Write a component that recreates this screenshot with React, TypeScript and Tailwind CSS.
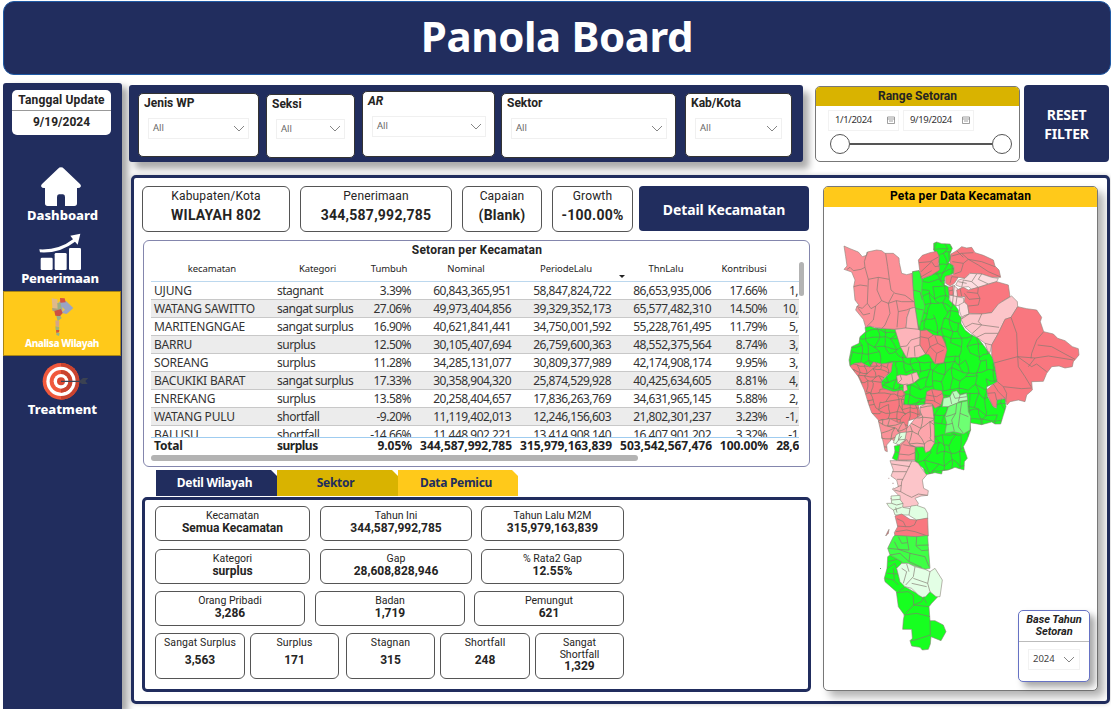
import React from "react";

const din = "font-['Roboto','Liberation_Sans',sans-serif]";
const seg = "font-['Noto_Sans','Open_Sans',sans-serif]";

const rows: string[][] = [
  ["UJUNG", "stagnant", "3.39%", "60,843,365,951", "58,847,824,722", "86,653,935,006", "17.66%", "1,"],
  ["WATANG SAWITTO", "sangat surplus", "27.06%", "49,973,404,856", "39,329,352,173", "65,577,482,310", "14.50%", "10,"],
  ["MARITENGNGAE", "sangat surplus", "16.90%", "40,621,841,441", "34,750,001,592", "55,228,761,495", "11.79%", "5,"],
  ["BARRU", "surplus", "12.50%", "30,105,407,694", "26,759,600,363", "48,552,375,564", "8.74%", "3,"],
  ["SOREANG", "surplus", "11.28%", "34,285,131,077", "30,809,377,989", "42,174,908,174", "9.95%", "3,"],
  ["BACUKIKI BARAT", "sangat surplus", "17.33%", "30,358,904,320", "25,874,529,928", "40,425,634,605", "8.81%", "4,"],
  ["ENREKANG", "surplus", "13.58%", "20,258,404,657", "17,836,263,769", "34,631,965,145", "5.88%", "2,"],
  ["WATANG PULU", "shortfall", "-9.20%", "11,119,402,013", "12,246,156,603", "21,802,301,237", "3.23%", "-1,"],
  ["BALUSU", "shortfall", "-14.66%", "11,448,902,221", "13,414,908,140", "16,407,901,202", "3.32%", "-1"],
];
const total = ["Total", "surplus", "9.05%", "344,587,992,785", "315,979,163,839", "503,542,567,476", "100.00%", "28,6"];
const gridCols = "grid grid-cols-[122px_89px_54px_100px_100px_100px_56px_27px] w-[648px]";

function Chevron() {
  return (
    <svg width="12" height="8" viewBox="0 0 12 8" className="shrink-0">
      <path d="M1 1l5 5 5-5" fill="none" stroke="#777" strokeWidth="0.9" />
    </svg>
  );
}

function Filter({ title, box, drop, italic }: { title: string; box: string; drop: string; italic?: boolean }) {
  return (
    <div className={`shrink-0 rounded-[5px] border border-[#333] bg-white ${box}`}>
      <div className={`pl-[5px] pt-[1px] text-[12px] font-bold leading-[17px] text-[#252423] ${din} ${italic ? "italic" : ""}`}>{title}</div>
      <div className={`ml-[9px] flex items-center justify-between border border-[#f0f0f0] pl-[4px] pr-[3px] ${drop}`}>
        <span className={`text-[9.5px] text-[#666] ${seg}`}>All</span>
        <Chevron />
      </div>
    </div>
  );
}

function Kpi({ label, value, w }: { label: string; value: string; w: string }) {
  return (
    <div className={`h-[46px] shrink-0 rounded-[6px] border border-[#555] bg-white text-center text-[#252423] ${din} ${w}`}>
      <div className="pt-[1px] text-[12px] leading-[16px] tracking-[0.15px]">{label}</div>
      <div className="whitespace-nowrap text-[14px] font-bold leading-[22px] tracking-[0.25px]">{value}</div>
    </div>
  );
}

function Stat({ label, value, w }: { label: string; value: string; w: string }) {
  return (
    <div className={`h-[35px] shrink-0 rounded-[6px] border border-[#555] bg-white text-center text-[#252423] ${din} ${w}`}>
      <div className="pt-[2px] text-[10.5px] leading-[13px]">{label}</div>
      <div className="text-[12px] font-bold leading-[12px]">{value}</div>
    </div>
  );
}

function Small({ label, value, w, tall }: { label: string; value: string; w: string; tall?: boolean }) {
  return (
    <div className={`h-[46px] shrink-0 rounded-[6px] border border-[#555] bg-white text-center text-[#252423] ${din} ${w}`}>
      <div className={`px-2 text-[10.5px] ${tall ? "pt-[3px] leading-[12px]" : "-mx-2 pt-[2px] leading-[14px] tracking-[0.1px]"}`}>{label}</div>
      <div className={`text-[12px] font-bold ${tall ? "leading-[11px]" : "leading-[21px]"}`}>{value}</div>
    </div>
  );
}

/** Brick-like network of irregular district borders. */
function mesh(x0: number, y0: number, x1: number, y1: number, sx: number, sy: number, seed: number) {
  let s = seed * 7919 + 13;
  const rnd = () => {
    s = (s * 1103515245 + 12345) % 2147483648;
    return s / 2147483648 - 0.5;
  };
  const nx = Math.ceil((x1 - x0) / sx) + 2;
  const ny = Math.ceil((y1 - y0) / sy) + 2;
  const pts: number[][][] = [];
  for (let j = 0; j < ny; j++) {
    const row: number[][] = [];
    for (let i = 0; i < nx; i++) row.push([x0 + (i - 0.5) * sx + rnd() * sx * 0.9, y0 + (j - 0.5) * sy + rnd() * sy * 0.9]);
    pts.push(row);
  }
  let d = "";
  for (let j = 0; j < ny; j++) {
    for (let i = 0; i < nx; i++) {
      const [x, y] = pts[j][i];
      if (i + 1 < nx && rnd() < 0.36) {
        const [a, b] = pts[j][i + 1];
        d += `M${x.toFixed(1)} ${y.toFixed(1)}Q${((x + a) / 2 + rnd() * 8).toFixed(1)} ${((y + b) / 2 + rnd() * 12).toFixed(1)} ${a.toFixed(1)} ${b.toFixed(1)}`;
      }
      if (j + 1 < ny && rnd() < 0.3) {
        const [a, b] = pts[j + 1][i];
        d += `M${x.toFixed(1)} ${y.toFixed(1)}Q${((x + a) / 2 + rnd() * 12).toFixed(1)} ${((y + b) / 2 + rnd() * 8).toFixed(1)} ${a.toFixed(1)} ${b.toFixed(1)}`;
      }
    }
  }
  return d;
}

type Region = { c: string; p: string; l?: string; m?: [number, number, number, number, number, number] };

const regions: Region[] = [
  {
    c: "#17ff20",
    p: "296,40 305,36 320,41 345,42 352,55 345,72 350,85 340,98 355,105 359,128 345,135 330,140 328,165 340,170 343,190 342,210 360,226 370,240 372,255 378,262 378,280 390,300 405,312 430,325 445,345 460,365 472,382 480,410 487,455 475,462 455,470 458,500 475,530 484,535 486,510 510,506 513,530 505,556 497,582 480,582 470,576 440,584 405,578 407,600 396,630 385,650 397,685 388,695 387,720 360,712 340,720 322,722 320,732 300,728 272,734 265,715 240,695 238,652 270,650 298,640 296,560 275,522 250,526 205,524 210,490 175,485 142,475 138,455 168,425 172,398 140,402 115,396 105,412 80,398 60,400 45,408 42,390 50,350 72,340 75,320 92,305 90,292 105,288 118,294 150,296 180,298 250,298 242,250 233,200 233,125 252,122 262,146 290,135 313,115 310,80 296,60",
    m: [40, 36, 515, 735, 25, 25],
  },
  {
    c: "#2cff34",
    p: "233,125 252,122 262,146 260,190 270,230 252,298 246,270 240,232 233,190",
    l: "M233 180L255 185L262 210M240 235L265 240",
  },
  {
    c: "#fc8f96",
    p: "27,48 45,56 70,66 82,80 95,76 97,66 125,60 140,62 150,70 175,70 192,84 193,98 200,130 215,134 231,130 233,160 236,200 240,232 225,236 216,262 213,294 180,298 150,296 118,292 105,288 92,292 85,268 62,240 66,228 72,226 60,210 56,170 60,150 50,126 27,118 36,108 32,80",
    l: "M36 118L45 112L55 122L78 118L90 112L88 95L97 66M90 112L100 148L130 142L163 148L158 110L152 70M100 148L97 220L82 235L66 230M130 142L126 180L140 212L160 220L184 212L200 215L236 215M163 148L168 180L180 190L210 196L236 215M176 190L160 220M97 220L108 236L122 228L140 212M122 228L115 270L95 290M184 212L190 245L186 292M160 220L165 250L150 285L140 296M56 170L75 165L97 168M190 245L214 240L225 236M70 235L85 255L105 250",
  },
  { c: "#fdb4ba", p: "225,236 240,232 246,270 250,298 256,302 255,345 272,372 250,382 215,384 196,350 190,330 180,298 213,294 216,262", l: "M213 294L252 298M196 350L215 348L228 330L255 322M215 384L222 350M240 380L238 350L255 345" },
  { c: "#f9777f", p: "250,90 262,76 285,68 305,64 313,80 310,100 314,120 290,135 260,146 254,120", l: "M252 98L285 95L312 80M258 125L290 95L300 110L312 108M256 142L290 122" },
  { c: "#f9777f", p: "256,302 275,300 295,315 320,318 330,340 336,360 326,398 300,402 282,374 272,372 255,345", l: "M256 320L280 325L295 315M280 325L285 350L272 372M285 350L308 340L330 352M308 340L300 318M285 350L305 370L326 360M305 370L300 400" },
  { c: "#f9777f", p: "45,408 60,400 80,398 105,412 115,396 140,402 172,398 168,425 150,440 138,455 142,475 175,485 200,480 210,490 205,524 250,526 257,556 240,566 220,572 215,620 140,625 140,590 130,570 110,548 100,520 88,480 70,440", m: [40, 396, 260, 625, 22, 18] },
  { c: "#fb9198", p: "130,572 165,566 190,578 207,576 215,596 240,640 240,690 190,692 176,684 190,640 170,628 155,645 157,665 150,662 140,615", m: [130, 566, 240, 692, 26, 24] },
  { c: "#fda5ab", p: "240,566 257,556 255,530 275,520 292,522 296,560 298,600 298,640 285,662 272,668 265,650 240,650 225,645 210,628 215,596", m: [215, 520, 300, 668, 30, 26] },
  { c: "#fdb4ba", p: "185,438 195,434 215,436 245,426 253,445 235,460 215,465 218,480 205,486 205,464 188,460", l: "M195 434L200 448L188 460M205 464L218 462M230 432L235 460" },
  { c: "#f9777f", p: "270,520 275,485 290,478 320,482 325,500 318,525 300,535 292,522", l: "M275 495L305 500L322 490M290 478L300 515M272 510L295 512L318 525" },
  { c: "#b8ffbb", p: "325,505 345,500 352,485 365,482 375,495 395,490 398,510 375,514 365,520 340,530 322,530", l: "M345 500L350 522M375 495L370 515M352 485L360 505L395 500" },
  { c: "#6eff73", p: "340,530 365,520 398,512 400,545 407,560 405,600 385,612 355,605 330,610 335,580 330,560", l: "M365 520L362 550L350 570L358 604M332 560L350 555L362 550M380 516L375 550L400 560M375 550L370 590L385 610M334 585L352 580" },
  {
    c: "#f9777f",
    p: "348,72 365,62 380,50 395,54 410,52 420,68 445,76 475,90 480,108 492,120 497,142 470,142 440,132 405,130 390,145 370,142 358,160 345,168 332,160 332,138 355,134 358,110 345,98",
    l: "M350 78L380 70L415 68M380 70L400 88L440 95L480 110M352 95L385 100L400 88L430 105L460 125L495 140M385 100L378 125L358 132M345 160L350 140L370 142M365 62L385 82",
  },
  { c: "#fddde0", p: "390,145 405,130 440,132 470,142 490,145 485,155 460,162 430,172 410,178 400,170 380,172 362,165 370,150", l: "M380 172L385 150L410 155L425 132M410 155L430 172M440 132L430 148L460 162M370 155L395 160" },
  { c: "#fddde0", p: "342,178 355,165 370,178 366,200 386,204 386,222 362,228 345,212", l: "M345 195L366 200M358 165L352 225M366 200L362 228" },
  { c: "#fddde0", p: "372,225 388,216 398,225 402,252 380,262 374,245" },
  { c: "#f9777f", p: "365,180 385,172 400,180 430,172 485,155 520,165 525,200 500,215 480,235 470,248 440,252 402,250 398,225 388,215 390,200 368,200", l: "M430 172L428 190L395 186M428 190L435 205L402 208M435 205L430 225L400 228M375 175L380 198M388 190L402 208" },
  { c: "#f9777f", p: "340,172 354,168 354,195 343,195", l: "M342 183L354 180" },
  { c: "#fcc5c9", p: "402,252 440,252 470,248 490,222 530,198 547,215 548,230 528,262 510,268 490,310 470,345 465,368 458,362 450,340 430,325 410,310 390,292 378,268 385,258", l: "M378 268L402 252M440 252L430 275L440 285L492 292M390 292L412 280L440 285M440 285L412 310M425 322L450 310L490 310M450 340L470 345" },
  {
    c: "#f9777f",
    p: "548,230 575,236 605,240 620,262 616,275 626,305 655,312 668,325 690,332 712,350 730,356 732,375 715,395 712,410 690,414 672,408 650,410 635,430 625,454 590,455 592,480 575,495 570,515 550,510 525,515 516,525 510,505 485,510 484,532 475,530 460,500 455,480 475,462 487,455 478,400 470,375 470,345 490,310 510,268 528,262",
    l: "M528 262L545 310L548 380L550 410L570 440L588 470M626 305L605 330L590 370L588 385M474 400L510 390L548 380L600 384L640 378L715 390M608 345L650 350L690 372L720 388M548 380L590 410L605 402L635 425M600 384L580 410M487 455L505 470L560 476L590 474M505 470L515 490L512 515M458 490L480 488L485 510M475 462L490 485L510 505",
  },
];

const south: Region[] = [
  { c: "#dcffde", p: "183,45 195,38 214,36 210,60 192,75 175,68", l: "M195 38L190 60L210 58M183 70L200 48" },
  { c: "#17ff20", p: "178,78 195,75 192,105 186,122 172,115 180,95", l: "M178 95L193 98" },
  { c: "#fb9198", p: "198,76 215,58 225,75 240,80 240,120 190,120 192,100", l: "M192 102L222 105L240 98M205 74L238 80" },
  { c: "#fcc5c9", p: "165,122 190,122 240,124 250,130 262,148 275,165 262,180 266,205 280,212 278,226 258,228 240,235 250,250 245,262 225,260 205,262 195,250 190,225 173,208 190,200 185,180 168,168 175,150", l: "M230 124L215 155L200 185L197 215L215 225L230 232L250 222L278 226M170 132L225 140M172 155L215 155M186 178L204 178M188 200L199 196M178 210L197 215" },
  { c: "#e0ffe2", p: "168,228 195,226 196,240 204,250 203,262 225,266 228,258 245,256 270,265 278,280 278,296 245,300 220,285 180,285 175,270 163,262 155,250 170,250", l: "M225 266L222 285M170 240L195 238M175 270L200 262M170 250L185 255L204 250M182 262L186 278" },
  { c: "#f9777f", p: "180,288 200,282 225,298 245,300 278,294 280,348 245,350 180,348 178,338 188,320", l: "M186 296L205 305L212 320L225 320L238 315L245 300M186 318L212 320M183 335L215 330L240 335L278 348" },
  { c: "#3eff45", p: "175,350 180,346 245,350 278,346 280,380 285,445 270,448 215,430 200,430 165,405 158,385", l: "M215 350L222 390L190 388L178 365M245 350L243 378L260 392L280 390M160 385L190 388L225 400L222 425M225 400L270 410L282 440M165 405L195 400L222 425L260 442M190 350L200 370L217 368M245 376L280 375" },
  { c: "#17ff20", p: "165,405 200,425 200,432 185,445 198,485 210,500 245,520 265,532 285,515 300,520 307,532 290,550 282,560 285,602 300,602 325,615 333,635 318,662 288,650 286,672 280,688 262,690 255,682 230,678 225,662 232,655 230,628 203,628 205,600 208,585 190,560 184,515 150,485 148,475 156,445 158,410", l: "M160 425L185 418M156 445L180 430L184 445M150 475L175 480L190 495M156 460L188 462M175 445L178 480M184 518L220 515L235 525L236 555L212 580M210 500L190 515M236 555L282 560M265 532L260 545L236 555M206 585L245 580L285 590M285 602L286 645L240 660L228 662M265 532L275 550" },
  { c: "#e3ffe5", p: "185,445 200,430 220,430 240,440 270,448 285,455 300,445 322,480 315,530 303,530 285,515 272,530 262,532 250,525 230,505 210,500 195,485", l: "M200 445L215 455L205 490M240 440L235 470L212 495M235 475L278 490M285 455L278 490L285 515M230 490L275 500M215 432L222 455" },
  { c: "#d4727c", p: "162,328 160,340 152,348 158,335" },
];

function Draw({ list, id }: { list: Region[]; id: string }) {
  return (
    <>
      {list.map((r, i) => (
        <g key={i}>
          <polygon points={r.p} fill={r.c} stroke="#8b8378" strokeWidth="1.8" strokeLinejoin="round" />
          {r.m && (
            <>
              <clipPath id={`${id}${i}`}>
                <polygon points={r.p} />
              </clipPath>
              <path clipPath={`url(#${id}${i})`} d={mesh(r.m[0], r.m[1], r.m[2], r.m[3], r.m[4], r.m[5], i + 3)} fill="none" stroke="#73806a" strokeWidth="2" />
            </>
          )}
          {r.l && <path d={r.l} fill="none" stroke="#82786f" strokeWidth="2" strokeLinejoin="round" />}
        </g>
      ))}
    </>
  );
}

function RegionMap() {
  return (
    <svg width="260" height="430" viewBox="0 0 780 1290" className="ml-[11px] mt-[23px] block">
      <Draw list={regions} id="n" />
      <g transform="translate(0 570)">
        <Draw list={south} id="s" />
        <rect x="135" y="444" width="3" height="3" fill="#6a9a6c" />
        <path d="M160 175h3M172 190h4M176 204l-4 3M170 236h-4" stroke="#a88" strokeWidth="2.5" />
      </g>
    </svg>
  );
}

function MiniMap() {
  return (
    <svg width="24" height="40" viewBox="0 0 72 120" className="block">
      <path d="M5 4l17 3 4 38-18-4z" fill="#dfb98b" />
      <path d="M26 14l22-2 22 21-20 18-24-5z" fill="#9aa4c4" />
      <path d="M30 3l14 1 3 12-16 1z" fill="#d5533f" />
      <path d="M22 18l10 0 3 18-12 6z" fill="#9cae82" />
      <path d="M6 33l18 2 2 9-18-2z" fill="#a9a27e" />
      <path d="M37 30l8 8-8 7z" fill="#e8c44b" />
      <path d="M13 42l20-6 5 12-8 10-14-2z" fill="#cd5042" />
      <path d="M19 57h12l4 6-12 10z" fill="#98b08b" />
      <path d="M16 70l12 2-1 18-10-2z" fill="#d3a58a" />
      <path d="M16 88l12 3-2 12-9-4z" fill="#9fb37a" />
      <path d="M18 99l10 0-1 7-8 2z" fill="#d5533f" />
      <path d="M19 107l10 1-2 9-8-3z" fill="#91b58b" />
    </svg>
  );
}

function Target() {
  return (
    <svg width="48" height="40" viewBox="0 0 144 120" className="block">
      <circle cx="57" cy="58" r="55" fill="#f0583c" />
      <path d="M57 3a55 55 0 0 1 0 110z" fill="#c9432f" />
      <circle cx="57" cy="58" r="44" fill="#fff" />
      <circle cx="57" cy="58" r="34" fill="#f0583c" />
      <path d="M57 24a34 34 0 0 1 0 68z" fill="#c9432f" />
      <circle cx="57" cy="58" r="22" fill="#fff" />
      <circle cx="57" cy="58" r="12" fill="#d84731" />
      <path d="M57 56h56l10-8h16l-9 9 7 9h-17l-9-6H57z" fill="#3b4252" />
    </svg>
  );
}

function CalendarIcon() {
  return (
    <svg width="8" height="8" viewBox="0 0 8 8" className="mb-[2px]">
      <path d="M.5 1h7v6.5h-7zM.5 3h7M2 5h4" fill="none" stroke="#777" strokeWidth=".7" />
    </svg>
  );
}

export default function App() {
  return (
    <div className="relative flex h-[709px] w-[1111px] flex-col overflow-hidden bg-white">
      <header className={`ml-[3px] mt-[1px] flex h-[74px] shrink-0 items-center justify-center rounded-[11px] border border-[#1f5aa5] bg-[#212d5e] pb-[6px] text-[42px] font-bold text-white ${seg}`}>
        <span className="tracking-[-0.4px]">Panola Board</span>
      </header>

      <div className="mt-[8px] flex min-h-0 flex-1">
        <aside className="ml-[3px] flex w-[119px] shrink-0 flex-col rounded-t-[3px] bg-[#212d5e] shadow-[6px_4px_7px_rgba(0,0,0,0.35)]">
          <div className={`ml-[9px] mt-[7px] h-[45px] w-[99px] rounded-[5px] bg-white text-center text-[12px] font-bold text-[#252423] ${din}`}>
            <div className="h-[21px] border-b border-[#999] leading-[20px] tracking-[0.15px]">Tanggal Update</div>
            <div className="leading-[23px]">9/19/2024</div>
          </div>
          <svg width="40" height="40" viewBox="0 0 120 120" className="ml-[38px] mt-[32px] block">
            <path d="M60 1q5 0 9 4l48 46q4 4 2 8-2 4-8 4h-3v46q0 8-8 8H72V90q0-8-6-8H54q-6 0-6 8v27H20q-8 0-8-8V63H9q-6 0-8-4-2-4 2-8L51 5q4-4 9-4z" fill="#fff" />
          </svg>
          <div className={`text-center text-[13px] font-extrabold leading-[17px] text-white ${seg}`}>Dashboard</div>
          <svg width="42" height="37" viewBox="0 0 126 111" className="ml-[36px] mt-[9px] block">
            <g fill="#fff">
              <rect x="5" y="74" width="36" height="37" rx="4" />
              <rect x="47" y="60" width="36" height="51" rx="4" />
              <rect x="90" y="45" width="36" height="66" rx="4" />
              <path d="M1 49Q60 52 102 19L94 8 124 2 116 35 108 26Q62 62 3 58z" />
            </g>
          </svg>
          <div className={`pr-[5px] text-center text-[13px] font-extrabold leading-[17px] text-white ${seg}`}><span className="tracking-[-0.2px]">Penerimaan</span></div>
          <div className="mt-[4px] flex h-[65px] w-[118px] flex-col items-center border border-[#a98514] bg-[#ffc91a] pt-[5px]">
            <MiniMap />
            <div className={`whitespace-nowrap text-[10px] font-extrabold leading-[13px] tracking-[-0.45px] text-white ${seg}`}>Analisa Wilayah</div>
          </div>
          <div className="ml-[39px] mt-[6px]"><Target /></div>
          <div className={`text-center text-[13px] font-extrabold leading-[14px] text-white ${seg}`}>Treatment</div>
        </aside>

        <div className="ml-[7px] mt-[2px] flex min-w-0 flex-1 flex-col">
          <div className="flex h-[77px] shrink-0">
            <div className="flex w-[674px] shrink-0 rounded-[3px] bg-[#212d5e] pl-[9px] shadow-[6px_7px_7px_rgba(0,0,0,0.33)]">
              <Filter title="Jenis WP" box="mt-[8px] h-[64px] w-[121px]" drop="mt-[6px] h-[21px] w-[101px]" />
              <Filter title="Seksi" box="ml-[7px] mt-[9px] h-[64px] w-[89px]" drop="mt-[6px] h-[20px] w-[69px]" />
              <Filter title="AR" italic box="ml-[7px] mt-[6px] h-[66px] w-[133px]" drop="mt-[6px] h-[21px] w-[114px]" />
              <Filter title="Sektor" box="ml-[6px] mt-[8px] h-[65px] w-[175px]" drop="mt-[6px] h-[21px] w-[156px]" />
              <Filter title="Kab/Kota" box="ml-[9px] mt-[8px] h-[64px] w-[107px]" drop="mt-[6px] h-[21px] w-[87px]" />
            </div>
            <div className="ml-[12px] mt-[1px] h-[76px] w-[205px] shrink-0 overflow-hidden rounded-[5px] border border-[#777] bg-white">
              <div className={`h-[19px] bg-[#d9b300] text-center text-[12px] font-bold leading-[19px] text-[#252423] ${din}`}>Range Setoran</div>
              <div className={`mt-[4px] flex gap-[4px] pl-[12px] text-[9.5px] text-[#333] ${seg}`}>
                <div className="flex h-[21px] w-[71px] items-center justify-between border border-[#f2f2f2] pl-[6px] pr-[3px]"><span className="tracking-[-0.35px]">1/1/2024</span><CalendarIcon /></div>
                <div className="flex h-[21px] w-[71px] items-center justify-between border border-[#f2f2f2] pl-[6px] pr-[3px]"><span className="tracking-[-0.35px]">9/19/2024</span><CalendarIcon /></div>
              </div>
              <div className="ml-[14px] mt-[3px] flex w-[182px] items-center">
                <div className="h-[20px] w-[20px] rounded-full border border-[#555]" />
                <div className="h-[2px] flex-1 bg-[#555]" />
                <div className="h-[20px] w-[20px] rounded-full border border-[#555]" />
              </div>
            </div>
            <div className={`ml-[4px] flex w-[85px] items-center justify-center rounded-[4px] bg-[#212d5e] text-center text-[14px] font-bold leading-[19px] text-white ${seg}`}>
              <span className="tracking-[-0.2px]">RESET<br />FILTER</span>
            </div>
          </div>

          <main className="ml-[2px] mt-[13px] flex h-[529px] w-[979px] shrink-0 rounded-[5px] border-[3px] border-[#212d5e] bg-white pl-[8px] pt-[8px] shadow-[0_0_4px_rgba(0,0,0,0.2)]">
            <section className="flex w-[668px] shrink-0 flex-col">
              <div className="flex h-[46px] shrink-0">
                <Kpi label="Kabupaten/Kota" value="WILAYAH 802" w="w-[148px]" />
                <Kpi label="Penerimaan" value="344,587,992,785" w="ml-[10px] w-[152px]" />
                <Kpi label="Capaian" value="(Blank)" w="ml-[10px] w-[80px]" />
                <Kpi label="Growth" value="-100.00%" w="ml-[10px] w-[81px]" />
                <div className={`ml-[6px] flex h-[45px] w-[170px] items-center justify-center rounded-[4px] bg-[#212d5e] pt-[2px] text-[14px] font-bold tracking-[-0.1px] text-white ${seg}`}>Detail Kecamatan</div>
              </div>

              <div className="ml-[1px] mt-[8px] flex h-[227px] w-[667px] shrink-0 flex-col rounded-[6px] border border-[#8486ad] pl-[7px]">
                <div className={`h-[20px] pr-[6px] text-center text-[12px] font-bold leading-[19px] tracking-[0.2px] text-[#252423] ${din}`}>Setoran per Kecamatan</div>
                <div className="flex">
                  <div className="h-[193px] w-[648px] overflow-hidden">
                    <div className={`${gridCols} h-[21px] border-b border-[#bcd8ee] text-center text-[9.5px] leading-[16px] tracking-[-0.1px] text-[#252423] ${seg}`}>
                      <span>kecamatan</span><span>Kategori</span><span>Tumbuh</span><span>Nominal</span>
                      <span className="relative">PeriodeLalu<i className="absolute right-[-9px] top-[14px] border-x-[3px] border-t-[3px] border-x-transparent border-t-[#222]" /></span>
                      <span>ThnLalu</span><span>Kontribusi</span><span />
                    </div>
                    <div className="h-[155px] overflow-hidden">
                      {rows.map((r, i) => (
                        <div key={i} className={`${gridCols} h-[18px] whitespace-nowrap border-b border-[#c8c8c8] text-[12px] leading-[17px] text-[#333] ${seg} ${i % 2 ? "bg-[#ececec]" : "bg-white"}`}>
                          {r.map((v, j) => (
                            <span key={j} className={j === 0 ? "pl-[3px] tracking-[-0.2px]" : j === 1 ? "pl-[4px] tracking-[-0.5px]" : j === 7 ? "pr-[1px] text-right tracking-[-0.5px]" : "pr-[5px] text-right tracking-[-0.53px]"}>{v}</span>
                          ))}
                        </div>
                      ))}
                    </div>
                    <div className={`${gridCols} h-[17px] whitespace-nowrap border-t border-[#9fccf0] text-[12px] font-bold leading-[16px] text-[#222] ${seg}`}>
                      {total.map((v, j) => (
                        <span key={j} className={j === 0 ? "pl-[3px] tracking-[-0.2px]" : j === 1 ? "pl-[4px] tracking-[-0.5px]" : j === 7 ? "flex justify-end tracking-[-0.3px]" : "flex justify-end pr-[4px] tracking-[-0.05px]"}>{v}</span>
                      ))}
                    </div>
                  </div>
                  <div className="mt-[1px] h-[34px] w-[5px] rounded-full bg-[#b3b3b3]" />
                </div>
                <div className="mt-[1px] h-[6px] w-[487px] rounded-full bg-[#b3b3b3]" />
              </div>

              <div className={`ml-[14px] mt-[3px] flex h-[26px] shrink-0 text-center text-[12px] font-bold leading-[26px] tracking-[-0.3px] ${seg}`}>
                <div className="w-[121px] bg-[#212d5e] pr-[4px] text-white [clip-path:polygon(0_0,115px_0,100%_6px,100%_100%,0_100%)]">Detil Wilayah</div>
                <div className="w-[121px] bg-[#d9b300] pr-[4px] text-[#212d5e] [clip-path:polygon(0_0,115px_0,100%_6px,100%_100%,0_100%)]">Sektor</div>
                <div className="w-[120px] bg-[#ffc91a] pr-[4px] text-[#212d5e] [clip-path:polygon(0_0,114px_0,100%_6px,100%_100%,0_100%)]">Data Pemicu</div>
              </div>

              <div className="mt-px h-[195px] w-[669px] shrink-0 rounded-[5px] border-[3px] border-[#212d5e] pl-[10px] pt-[6px]">
                <div className="flex">
                  <Stat label="Kecamatan" value="Semua Kecamatan" w="w-[155px]" />
                  <Stat label="Tahun Ini" value="344,587,992,785" w="ml-[10px] w-[152px]" />
                  <Stat label="Tahun Lalu M2M" value="315,979,163,839" w="ml-[9px] w-[143px]" />
                </div>
                <div className="mt-[8px] flex">
                  <Stat label="Kategori" value="surplus" w="w-[155px]" />
                  <Stat label="Gap" value="28,608,828,946" w="ml-[10px] w-[152px]" />
                  <Stat label="% Rata2 Gap" value="12.55%" w="ml-[9px] w-[143px]" />
                </div>
                <div className="mt-[7px] flex">
                  <Stat label="Orang Pribadi" value="3,286" w="w-[150px]" />
                  <Stat label="Badan" value="1,719" w="ml-[10px] w-[150px]" />
                  <Stat label="Pemungut" value="621" w="ml-[9px] w-[150px]" />
                </div>
                <div className="mt-[7px] flex">
                  <Small label="Sangat Surplus" value="3,563" w="w-[90px]" />
                  <Small label="Surplus" value="171" w="ml-[5px] w-[89px]" />
                  <Small label="Stagnan" value="315" w="ml-[7px] w-[89px]" />
                  <Small label="Shortfall" value="248" w="ml-[5px] w-[90px]" />
                  <Small label="Sangat Shortfall" value="1,329" w="ml-[5px] w-[89px]" tall />
                </div>
              </div>
            </section>

            <section className="relative ml-[13px] h-[505px] w-[275px] shrink-0 rounded-[5px] border border-[#777] bg-white shadow-[6px_6px_8px_rgba(0,0,0,0.3)]">
              <div className={`h-[20px] rounded-t-[4px] bg-[#ffc91a] text-center text-[12px] font-bold leading-[19px] tracking-[0.2px] text-black ${din}`}>Peta per Data Kecamatan</div>
              <RegionMap />
              <div className={`absolute bottom-[8px] right-[7px] h-[72px] w-[72px] rounded-[5px] border border-[#6672c4] bg-white shadow-[5px_5px_7px_rgba(0,0,0,0.35)] ${din}`}>
                <div className="h-[31px] border-b border-[#bbb] pt-[3px] text-center text-[11px] font-bold italic leading-[12px] text-[#252423]">Base Tahun<br />Setoran</div>
                <div className={`ml-[9px] mt-[7px] flex h-[21px] w-[52px] items-center justify-between border border-[#f2f2f2] px-[4px] text-[9.5px] text-[#444] ${seg}`}>2024<Chevron /></div>
              </div>
            </section>
          </main>
        </div>
      </div>
    </div>
  );
}
